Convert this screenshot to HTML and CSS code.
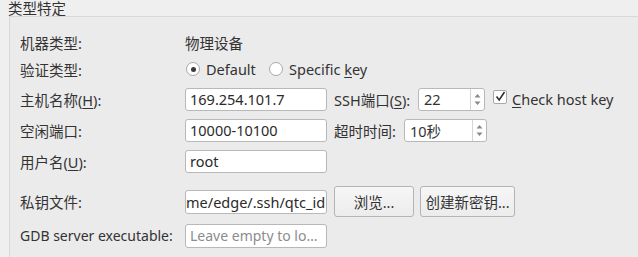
FILE: index.html
```html
<!DOCTYPE html>
<html>
<head>
<meta charset="utf-8">
<link rel="stylesheet" href="styles.css">
</head>
<body>
<div class="group">
  <div class="group-title">类型特定</div>
  <div class="frame">
    <div class="row r1">
      <div class="label">机器类型:</div>
      <div class="value">物理设备</div>
    </div>
    <div class="row r2">
      <div class="label">验证类型:</div>
      <div class="radios">
        <span class="radio checked"></span><span class="rtext first">Default</span>
        <span class="radio"></span><span class="rtext">Specific <u>k</u>ey</span>
      </div>
    </div>
    <div class="row r3">
      <div class="label">主机名称(<u>H</u>):</div>
      <div class="input w141">169.254.101.7</div>
      <div class="sublabel s1">SSH端口(<u>S</u>):</div>
      <div class="spin w67"><span class="spin-text">22</span><span class="arrows"><svg width="9" height="17" viewBox="0 0 9 17"><path d="M1.5 6.5 L4.5 3 L7.5 6.5 Z M1.5 10.5 L4.5 14 L7.5 10.5 Z" fill="#8a8a8a"/></svg></span></div>
      <span class="check"><svg width="11" height="11" viewBox="0 0 11 11"><path d="M1.5 5.5 L4.2 9 L9.5 1" fill="none" stroke="#2e2e2e" stroke-width="1.6"/></svg></span>
      <span class="ctext"><u>C</u>heck host key</span>
    </div>
    <div class="row r4">
      <div class="label">空闲端口:</div>
      <div class="input w141">10000-10100</div>
      <div class="sublabel s2">超时时间:</div>
      <div class="spin w83"><span class="spin-text">10秒</span><span class="arrows"><svg width="9" height="17" viewBox="0 0 9 17"><path d="M1.5 6.5 L4.5 3 L7.5 6.5 Z M1.5 10.5 L4.5 14 L7.5 10.5 Z" fill="#8a8a8a"/></svg></span></div>
    </div>
    <div class="row r5">
      <div class="label">用户名(<u>U</u>):</div>
      <div class="input w141">root</div>
    </div>
    <div class="row r6">
      <div class="label">私钥文件:</div>
      <div class="input w141 keypath">me/edge/.ssh/qtc_id</div>
      <div class="button b1">浏览...</div>
      <div class="button b2">创建新密钥...</div>
    </div>
    <div class="row r7">
      <div class="label gdb">GDB server executable:</div>
      <div class="input w141 placeholder">Leave empty to lo…</div>
    </div>
  </div>
</div>
</body>
</html>
```
FILE: styles.css
```css
html, body {
  margin: 0;
  padding: 0;
  background: #efefef;
  overflow: hidden;
}
body {
  font-family: "Noto Sans", "Noto Sans CJK SC", sans-serif;
  font-size: 14.5px;
  color: #333333;
  width: 638px;
  height: 257px;
}
.group {
  padding-left: 8px;
}
.group-title {
  height: 16px;
  line-height: 16px;
  font-size: 14.5px;
}
.frame {
  margin-left: 1px;
  border-top: 1px solid #d8d8d8;
  border-left: 1px solid #d8d8d8;
  background: #ebebeb;
  height: 241px;
  padding-left: 10px;
  padding-top: 14px;
  box-sizing: border-box;
}
.row {
  display: flex;
  align-items: center;
  white-space: nowrap;
}
.label {
  width: 165px;
  flex: none;
}
.gdb { font-size: 14px; }
.r1 { height: 22px; }
.r2 { height: 22px; margin-top: 5px; }
.r3 { height: 24px; margin-top: 7px; }
.r4 { height: 24px; margin-top: 7px; }
.r5 { height: 24px; margin-top: 7px; }
.r6 { height: 31px; margin-top: 13px; }
.r7 { height: 25px; margin-top: 6px; }
u { text-decoration: underline; text-underline-offset: 2px; }
.radios {
  display: flex;
  align-items: center;
}
.radio {
  width: 12px;
  height: 12px;
  border: 1px solid #a8a8a8;
  border-radius: 50%;
  background: #ffffff;
  margin-left: 1px;
  display: flex;
  align-items: center;
  justify-content: center;
}
.radio.checked::after {
  content: "";
  width: 5px;
  height: 5px;
  border-radius: 50%;
  background: #3a3a3a;
}
.rtext { margin-left: 6px; }
.rtext.first { width: 62px; }
.input {
  height: 23px;
  box-sizing: border-box;
  border: 1px solid #b8b8b8;
  border-radius: 3px;
  background: #ffffff;
  padding-left: 4px;
  display: flex;
  align-items: center;
  overflow: hidden;
  color: #2a2a2a;
}
.w141 { width: 142px; }
.r6 .input, .r7 .input { height: 24px; }
.keypath { padding-left: 0; }
.placeholder { color: #8c8c8c; font-size: 14px; }
.sublabel { margin-left: 7px; flex: none; }
.s1 { width: 84px; }
.s2 { width: 70px; }
.spin {
  height: 23px;
  box-sizing: border-box;
  border: 1px solid #b8b8b8;
  border-radius: 3px;
  background: #ffffff;
  display: flex;
  align-items: stretch;
}
.w67 { width: 67px; }
.w83 { width: 83px; }
.spin-text {
  flex: 1;
  padding-left: 5px;
  display: flex;
  align-items: center;
}
.arrows {
  width: 13px;
  border-left: 1px solid #d4d4d4;
  display: flex;
  align-items: center;
  justify-content: center;
}
.check {
  width: 12px;
  height: 12px;
  border: 1px solid #a8a8a8;
  border-radius: 2px;
  background: #ffffff;
  margin-left: 8px;
  margin-top: -5px;
  display: flex;
  align-items: center;
  justify-content: center;
}
.ctext { margin-left: 5px; }
.button {
  height: 31px;
  box-sizing: border-box;
  border: 1px solid #b4b4b4;
  border-radius: 3px;
  background: linear-gradient(#f6f6f6, #ececec);
  display: flex;
  align-items: center;
  justify-content: center;
  flex: none;
}
.b1 { width: 80px; margin-left: 7px; }
.b2 { width: 95px; margin-left: 6px; }
```
